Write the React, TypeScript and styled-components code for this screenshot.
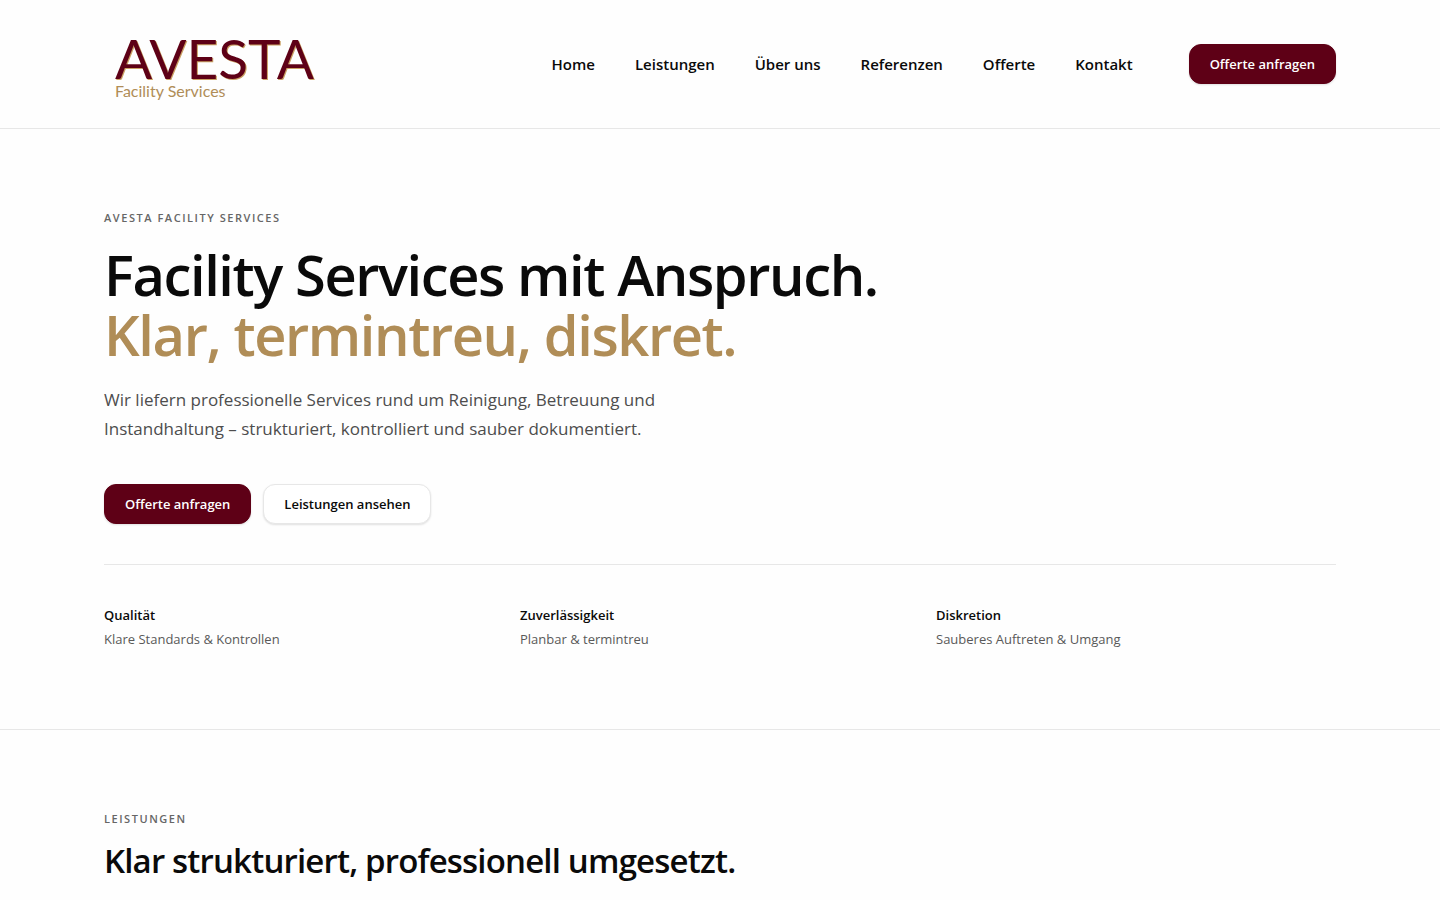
import React from "react";
import styled, { createGlobalStyle, css } from "styled-components";

const ink = "#0a0a0a";
const wine = "#5e0016";
const gold = "#b08d57";
const line = "#e7e7e7";

const GlobalStyle = createGlobalStyle`
  *, *::before, *::after { box-sizing: border-box; }
  body {
    margin: 0;
    background: #fefefe;
    color: ${ink};
    font-family: "Open Sans", "Noto Sans", sans-serif;
    font-size: 16px;
    line-height: 24px;
  }
  h1, h2, p, dl, dt, dd, ul { margin: 0; padding: 0; }
`;

const Container = styled.div`
  width: 100%;
  max-width: 1280px;
  margin: 0 auto;
  padding: 0 24px;
`;

const Header = styled.header`
  border-bottom: 1px solid ${line};
`;

const HeaderRow = styled(Container)`
  display: flex;
  align-items: center;
  justify-content: space-between;
  height: 128px;
`;

const Logo = styled.a`
  display: flex;
  flex-direction: column;
  padding: 8px 11px 0;
  font-family: Lato, sans-serif;
  text-decoration: none;
`;

const LogoName = styled.span`
  color: ${wine};
  font-size: 55px;
  line-height: 46px;
  text-shadow: 1px 1px 0 #c9a063;
`;

const LogoTag = styled.span`
  color: ${gold};
  font-size: 16px;
  line-height: 20px;
`;

const HeaderEnd = styled.div`
  display: flex;
  align-items: center;
  gap: 56px;
`;

const Nav = styled.nav`
  display: flex;
  gap: 40px;
`;

const NavLink = styled.a`
  color: ${ink};
  font-size: 15px;
  font-weight: 600;
  text-decoration: none;
`;

const Button = styled.button<{ $outline?: boolean }>`
  height: 40px;
  padding: 0 20px;
  border: 1px solid ${wine};
  border-radius: 12px;
  background: ${wine};
  color: #fff;
  font: 600 13px/20px "Open Sans", "Noto Sans", sans-serif;
  box-shadow: 0 1px 2px rgba(0, 0, 0, 0.12);
  cursor: pointer;
  ${(p) =>
    p.$outline &&
    css`
      border-color: ${line};
      background: #fff;
      color: ${ink};
    `}
`;

const Section = styled.section`
  padding: 80px 0;
  border-bottom: 1px solid ${line};
`;

const Eyebrow = styled.p`
  color: #666;
  font-size: 11px;
  font-weight: 600;
  line-height: 18px;
  letter-spacing: 0.14em;
  text-transform: uppercase;
`;

const Title = styled.h1`
  margin-top: 17px;
  font-size: 56px;
  font-weight: 600;
  line-height: 60px;
  letter-spacing: -0.025em;
`;

const Accent = styled.span`
  display: block;
  color: ${gold};
`;

const Lead = styled.p`
  max-width: 600px;
  margin-top: 21px;
  color: #4d4d4d;
  font-size: 17px;
  line-height: 29px;
`;

const Actions = styled.div`
  display: flex;
  gap: 12px;
  margin-top: 41px;
`;

const Facts = styled.dl`
  display: grid;
  grid-template-columns: repeat(3, 1fr);
  gap: 16px;
  margin-top: 40px;
  padding-top: 40px;
  border-top: 1px solid ${line};
`;

const FactName = styled.dt`
  font-size: 13px;
  font-weight: 600;
  line-height: 20px;
`;

const FactText = styled.dd`
  margin-top: 4px;
  color: #595959;
  font-size: 13px;
  line-height: 20px;
`;

const Subtitle = styled.h2`
  margin-top: 13px;
  font-size: 33px;
  font-weight: 600;
  line-height: 40px;
  letter-spacing: -0.025em;
`;

const links = ["Home", "Leistungen", "Über uns", "Referenzen", "Offerte", "Kontakt"];

const facts = [
  { name: "Qualität", text: "Klare Standards & Kontrollen" },
  { name: "Zuverlässigkeit", text: "Planbar & termintreu" },
  { name: "Diskretion", text: "Sauberes Auftreten & Umgang" },
];

export default function App() {
  return (
    <>
      <GlobalStyle />
      <Header>
        <HeaderRow>
          <Logo href="#home">
            <LogoName>AVESTA</LogoName>
            <LogoTag>Facility Services</LogoTag>
          </Logo>
          <HeaderEnd>
            <Nav>
              {links.map((label) => (
                <NavLink key={label} href={`#${label.toLowerCase().replace(" ", "-")}`}>
                  {label}
                </NavLink>
              ))}
            </Nav>
            <Button type="button">Offerte anfragen</Button>
          </HeaderEnd>
        </HeaderRow>
      </Header>
      <main>
        <Section id="home">
          <Container>
            <Eyebrow>Avesta Facility Services</Eyebrow>
            <Title>
              Facility Services mit Anspruch.
              <Accent>Klar, termintreu, diskret.</Accent>
            </Title>
            <Lead>
              Wir liefern professionelle Services rund um Reinigung, Betreuung und
              Instandhaltung – strukturiert, kontrolliert und sauber dokumentiert.
            </Lead>
            <Actions>
              <Button type="button">Offerte anfragen</Button>
              <Button type="button" $outline>
                Leistungen ansehen
              </Button>
            </Actions>
            <Facts>
              {facts.map((fact) => (
                <div key={fact.name}>
                  <FactName>{fact.name}</FactName>
                  <FactText>{fact.text}</FactText>
                </div>
              ))}
            </Facts>
          </Container>
        </Section>
        <Section id="leistungen">
          <Container>
            <Eyebrow>Leistungen</Eyebrow>
            <Subtitle>Klar strukturiert, professionell umgesetzt.</Subtitle>
          </Container>
        </Section>
      </main>
    </>
  );
}
